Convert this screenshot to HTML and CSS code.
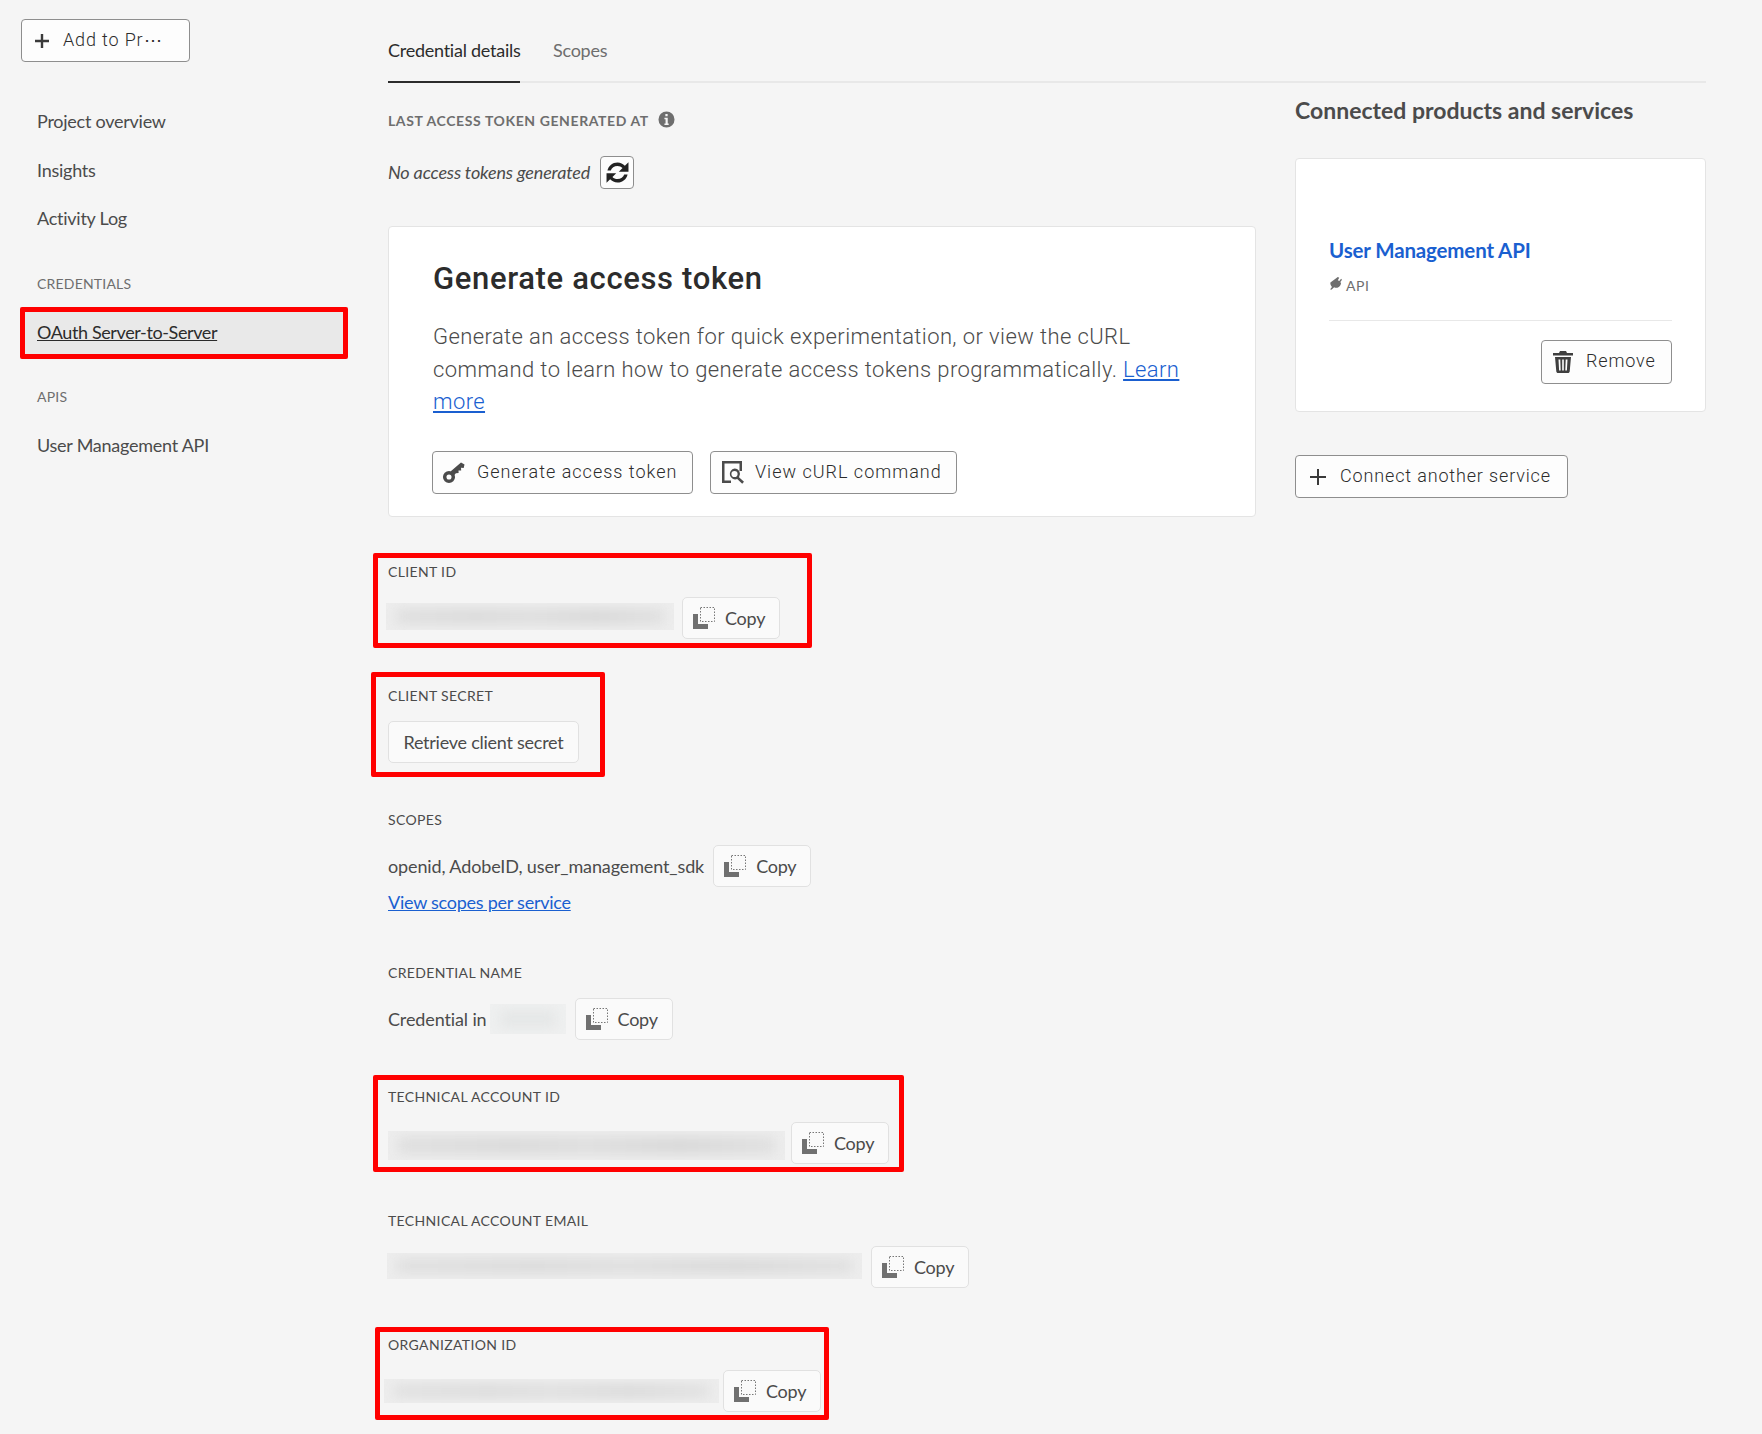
FILE: index.html
```html
<!DOCTYPE html>
<html lang="en">
<head>
<meta charset="utf-8">
<title>Credential details</title>
<link rel="stylesheet" href="styles.css">
</head>
<body>
<div class="page">
  <aside class="sidebar">
    <button class="btn btn-add"><svg class="ico-plus" viewBox="0 0 14 14"><path d="M5.800 0h2.400v5.800H14v2.400H8.200V14H5.800V8.200H0V5.800h5.800z"/></svg><span>Add to Pr⋯</span></button>
    <nav class="nav">
      <a class="nav-item">Project overview</a>
      <a class="nav-item">Insights</a>
      <a class="nav-item">Activity Log</a>
      <div class="nav-head nav-head-cred">CREDENTIALS</div>
      <a class="nav-item nav-active"><span>OAuth Server-to-Server</span><i class="mark"></i></a>
      <div class="nav-head nav-head-api">APIS</div>
      <a class="nav-item">User Management API</a>
    </nav>
  </aside>
  <main class="main">
    <div class="tabs">
      <a class="tab tab-active">Credential details</a>
      <a class="tab">Scopes</a>
    </div>
    <div class="columns">
      <section class="left">
        <div class="token-head">
          <span class="token-label">LAST ACCESS TOKEN GENERATED AT</span>
          <svg class="ico-info" viewBox="0 0 18 18"><path fill-rule="evenodd" d="M9 .5a8.500 8.500 0 1 0 0 17 8.500 8.500 0 0 0 0-17zM7.800 3.200h2.400v2.400H7.800zM6.800 7.200h3.500v6h1v1.500H6.800v-1.500h1.200V8.700H6.800z"/></svg>
        </div>
        <div class="token-row">
          <em>No access tokens generated</em>
          <button class="btn btn-refresh"><svg viewBox="0 0 24 24"><path d="M4.200 10.500C5 6.800 8.200 4.200 12 4.200c2.300 0 4.300 1 5.700 2.500L20.500 4v7.500H13l2.900-2.900c-1-1-2.400-1.700-3.900-1.700-2.500 0-4.600 1.600-5.200 3.600zM19.800 13.500c-.8 3.700-4 6.300-7.800 6.300-2.300 0-4.300-1-5.700-2.500L3.500 20v-7.500H11l-2.900 2.900c1 1 2.400 1.700 3.900 1.700 2.500 0 4.600-1.600 5.200-3.600z"/></svg></button>
        </div>
        <div class="card gen">
          <h2 class="gen-title">Generate access token</h2>
          <p class="gen-text">Generate an access token for quick experimentation, or view the cURL command to learn how to generate access tokens programmatically. <a class="gen-link">Learn</a> <a class="gen-link">more</a></p>
          <div class="gen-actions">
            <button class="btn btn-gen"><svg viewBox="0 0 24 24"><circle class="key-ring" cx="7" cy="17" r="4.300"/><path d="M8.500 11.500L19 2.500l3.500 2-.8 3.500-2.700-.3.200 2.700-2.700.2.100 2.400-2.700.2-2.300 2.500z"/></svg><span>Generate access token</span></button>
            <button class="btn btn-curl"><svg viewBox="0 0 24 24"><path fill-rule="evenodd" d="M1 1h20v10h-2.500V3.500h-15v17H10V23H1z"/><path fill-rule="evenodd" d="M13.500 8.500a5.500 5.500 0 0 1 4.500 8.700l5 4.600-1.800 2-5-4.700a5.500 5.500 0 1 1-2.700-10.600zm0 2.400a3.100 3.100 0 1 0 0 6.200 3.100 3.100 0 0 0 0-6.200z"/></svg><span>View cURL command</span></button>
          </div>
        </div>

        <div class="field field-first">
          <i class="mark mark-client"></i>
          <div class="field-label">CLIENT ID</div>
          <div class="field-row">
            <div class="redact redact-client"></div>
            <button class="btn-copy"><svg class="ico-copy" viewBox="0 0 22 22"><path d="M0 7h5v10h10v5H0z"/><rect x="7.500" y=".5" width="14" height="14" fill="none" stroke="#777" stroke-dasharray="1.500 1.500"/></svg><span>Copy</span></button>
          </div>
        </div>

        <div class="field">
          <i class="mark mark-secret"></i>
          <div class="field-label">CLIENT SECRET</div>
          <div class="field-row">
            <button class="btn-copy btn-secret">Retrieve client secret</button>
          </div>
        </div>

        <div class="field">
          <div class="field-label">SCOPES</div>
          <div class="field-row">
            <span class="value">openid, AdobeID, user_management_sdk</span>
            <button class="btn-copy"><svg class="ico-copy" viewBox="0 0 22 22"><path d="M0 7h5v10h10v5H0z"/><rect x="7.500" y=".5" width="14" height="14" fill="none" stroke="#777" stroke-dasharray="1.500 1.500"/></svg><span>Copy</span></button>
          </div>
          <a class="scope-link">View scopes per service</a>
        </div>

        <div class="field field-after-link">
          <div class="field-label">CREDENTIAL NAME</div>
          <div class="field-row">
            <span class="value">Credential in</span>
            <div class="redact redact-name"></div>
            <button class="btn-copy"><svg class="ico-copy" viewBox="0 0 22 22"><path d="M0 7h5v10h10v5H0z"/><rect x="7.500" y=".5" width="14" height="14" fill="none" stroke="#777" stroke-dasharray="1.500 1.500"/></svg><span>Copy</span></button>
          </div>
        </div>

        <div class="field">
          <i class="mark mark-tech"></i>
          <div class="field-label">TECHNICAL ACCOUNT ID</div>
          <div class="field-row">
            <div class="redact redact-tech"></div>
            <button class="btn-copy"><svg class="ico-copy" viewBox="0 0 22 22"><path d="M0 7h5v10h10v5H0z"/><rect x="7.500" y=".5" width="14" height="14" fill="none" stroke="#777" stroke-dasharray="1.500 1.500"/></svg><span>Copy</span></button>
          </div>
        </div>

        <div class="field">
          <div class="field-label">TECHNICAL ACCOUNT EMAIL</div>
          <div class="field-row">
            <div class="redact redact-email"></div>
            <button class="btn-copy"><svg class="ico-copy" viewBox="0 0 22 22"><path d="M0 7h5v10h10v5H0z"/><rect x="7.500" y=".5" width="14" height="14" fill="none" stroke="#777" stroke-dasharray="1.500 1.500"/></svg><span>Copy</span></button>
          </div>
        </div>

        <div class="field">
          <i class="mark mark-org"></i>
          <div class="field-label">ORGANIZATION ID</div>
          <div class="field-row">
            <div class="redact redact-org"></div>
            <button class="btn-copy"><svg class="ico-copy" viewBox="0 0 22 22"><path d="M0 7h5v10h10v5H0z"/><rect x="7.500" y=".5" width="14" height="14" fill="none" stroke="#777" stroke-dasharray="1.500 1.500"/></svg><span>Copy</span></button>
          </div>
        </div>
      </section>

      <section class="right">
        <h2 class="right-title">Connected products and services</h2>
        <div class="card service">
          <a class="service-name">User Management API</a>
          <div class="service-type"><svg viewBox="0 0 14 14"><path d="M9.500 0l1.500.8-1.500 2.700 1.600.9L13 1.800l1 1.200-2 2.600 1 .6c-.2 2.600-1.700 4.700-4 5.300-1.300.4-2.500.2-3.500-.4L3.500 13 2 14l-.5-1 1.700-2.300C1.800 9.400 1.200 7.500 1.500 6z"/></svg><span>API</span></div>
          <div class="service-foot">
            <button class="btn btn-remove"><svg viewBox="0 0 20 22"><path fill-rule="evenodd" d="M7 0h6l1 2h6v2.500H0V2h6zM2 6h16l-1.300 14.500c-.1.900-.8 1.500-1.700 1.500H5c-.9 0-1.600-.6-1.700-1.500zM5.500 8.500l.6 11h1.600l-.4-11zm3.700 0v11h1.600v-11zm3.500 0l-.4 11h1.600l.6-11z"/></svg><span>Remove</span></button>
          </div>
        </div>
        <button class="btn btn-connect"><svg class="ico-plus" viewBox="0 0 16 16"><path d="M7 0h2v7h7v2H9v7H7V9H0V7h7z"/></svg><span>Connect another service</span></button>
      </section>
    </div>
  </main>
</div>
</body>
</html>
```
FILE: styles.css
```css
* { box-sizing: border-box; }
html, body { margin: 0; padding: 0; }
body {
  background: #f5f5f5;
  color: #4b4b4b;
  font-family: Lato, "Noto Sans", "Liberation Sans", sans-serif;
  font-size: 18px;
  letter-spacing: -.25px;
}
.page {
  display: flex;
  height: 1434px;
  overflow: hidden;
}
button { font: inherit; color: inherit; letter-spacing: inherit; cursor: pointer; }

/* Sidebar */
.sidebar {
  flex: 0 0 388px;
  padding: 19px 0 0 21px;
}
.btn {
  display: inline-flex;
  align-items: center;
  background: #fdfdfd;
  border: 1px solid #8e8e8e;
  border-radius: 4px;
  font-family: Roboto, "Liberation Sans", sans-serif;
  font-size: 18px;
  font-weight: 300;
  letter-spacing: .85px;
  color: #2c2c2c;
  padding: 0 0 2px;
}
.btn-add {
  width: 169px;
  height: 43px;
  padding-left: 13px;
}
.ico-plus { width: 14px; height: 14px; fill: #3a3a3a; flex: none; margin-top: 2px; }
.btn-add span { margin-left: 14px; }
.nav { margin-top: 47px; }
.nav-item {
  display: block;
  height: 48.500px;
  line-height: 24px;
  margin-left: 16px;
  color: #4b4b4b;
}
.nav-head {
  font-size: 14px;
  line-height: 20px;
  margin-left: 16px;
  letter-spacing: .2px;
  color: #6e6e6e;
}
.nav-head-cred { margin-top: 19px; }
.nav-active {
  position: relative;
  width: 328px;
  height: 52px;
  margin: 13px 0 28px -1px;
  padding-left: 17px;
  line-height: 50px;
  letter-spacing: -.38px;
  background: #e9e9e9;
  color: #2c2c2c;
}
.nav-active span { text-decoration: underline; }
.nav-head-api { margin-bottom: 26px; }
.mark {
  position: absolute;
  border: 5px solid #f00;
  border-radius: 2px;
  pointer-events: none;
}
.nav-active .mark { inset: 0; }

/* Main */
.main { flex: 0 0 1318px; }
.tabs {
  display: flex;
  gap: 33px;
  height: 83px;
  padding-top: 38px;
  border-bottom: 2px solid #e8e8e8;
}
.tab {
  height: 45px;
  line-height: 24px;
  color: #6e6e6e;
}
.tab-active {
  width: 132px;
  color: #2c2c2c;
  border-bottom: 2px solid #2c2c2c;
  white-space: nowrap;
}
.columns { display: flex; gap: 39px; }
.left { flex: 0 0 868px; }
.right { flex: 0 0 411px; }

.token-head {
  display: flex;
  align-items: center;
  height: 20px;
  margin-top: 27px;
}
.token-label {
  font-size: 14px;
  font-weight: 700;
  letter-spacing: .6px;
  color: #6e6e6e;
}
.ico-info { width: 17px; height: 17px; fill: #6e6e6e; margin: -2px 0 0 9px; }
.token-row {
  display: flex;
  align-items: center;
  gap: 10px;
  height: 33px;
  margin-top: 26px;
}
.token-row em { color: #4b4b4b; margin-bottom: 2px; letter-spacing: -.15px; }
.btn-refresh {
  width: 34px;
  height: 33px;
  justify-content: center;
  padding: 0;
}
.btn-refresh svg { width: 31px; height: 31px; fill: #222; flex: none; }

.card {
  background: #fff;
  border: 1px solid #e4e4e4;
  border-radius: 4px;
}
.gen {
  height: 291px;
  margin-top: 37px;
  padding: 33px 43px 0 44px;
}
.gen-title {
  margin: 0;
  font-family: Roboto, "Liberation Sans", sans-serif;
  font-size: 31px;
  font-weight: 500;
  line-height: 38px;
  letter-spacing: .65px;
  color: #2c2c2c;
}
.gen-text {
  margin: 23px 0 0;
  font-family: Roboto, "Liberation Sans", sans-serif;
  font-size: 22px;
  font-weight: 300;
  line-height: 32.500px;
  letter-spacing: .4px;
  color: #4b4b4b;
}
.gen-link, .scope-link { color: #1a5fd0; text-decoration: underline; }
.gen-actions {
  display: flex;
  gap: 17px;
  margin: 32px 0 0 -1px;
}
.btn-gen, .btn-curl { height: 43px; letter-spacing: 1px; }
.btn-gen { width: 261px; padding-left: 9px; }
.btn-curl { width: 247px; padding-left: 10px; }
.btn-gen svg, .btn-curl svg { width: 24px; height: 24px; fill: #4b4b4b; flex: none; margin-top: 2px; }
.key-ring { fill: none; stroke: #4b4b4b; stroke-width: 3.500; }
.btn-gen span { margin-left: 11px; }
.btn-curl span { margin-left: 10px; }

/* Fields */
.field {
  position: relative;
  margin-top: 47px;
}
.field-first { margin-top: 45px; }
.field-after-link { margin-top: 49px; }
.field-label {
  height: 20px;
  line-height: 20px;
  font-size: 14px;
  letter-spacing: .35px;
  color: #4b4b4b;
}
.field-row {
  display: flex;
  align-items: center;
  height: 42px;
  margin-top: 15px;
}
.value { letter-spacing: -.12px; }
.btn-copy {
  display: inline-flex;
  align-items: center;
  flex: none;
  height: 42px;
  background: #fafafa;
  border: 1px solid #e1e1e1;
  border-radius: 5px;
  padding: 0 0 0 10px;
  width: 98px;
  font-size: 18px;
  color: #4b4b4b;
}
.ico-copy { width: 22px; height: 22px; fill: #707070; flex: none; }
.btn-copy span { margin-left: 10px; }
.btn-secret { width: 191px; padding: 0; justify-content: center; }
.field-row .value + .btn-copy { margin-left: 9px; }
.scope-link {
  display: block;
  line-height: 24px;
  margin-top: 3px;
}

.redact {
  position: relative;
  overflow: hidden;
  flex: none;
  background: #ededed;
}
.redact::before {
  content: "";
  position: absolute;
  inset: 6px 10px;
  background: linear-gradient(90deg, #dfdfdf, #dadada 30%, #dedede 50%, #d8d8d8 75%, #e0e0e0);
  filter: blur(6px);
}
.redact-client { width: 288px; height: 27px; margin: -3px 8px 0 -2px; }
.redact-name { width: 76px; height: 30px; margin: 0 9px 0 3px; background: #eff0f0; }
.redact-name::before { background: #e5e7e7; }
.redact-tech { width: 397px; height: 29px; margin: 4px 6px 0 0; }
.redact-email { width: 475px; height: 26px; margin: -3px 9px 0 -1px; }
.redact-org { width: 335px; height: 24px; margin: 0 4px 0 -4px; }

.mark-client { left: -15px; top: -9px; width: 439px; height: 95px; }
.mark-secret { left: -17px; top: -14px; width: 234px; height: 105px; }
.mark-tech { left: -15px; top: -12px; width: 531px; height: 97px; }
.mark-org { left: -13px; top: -8px; width: 454px; height: 93px; }

/* Right */
.right-title {
  margin: 12px 0 0;
  font-size: 23px;
  font-weight: 700;
  line-height: 30px;
  letter-spacing: 0;
  color: #4b4b4b;
}
.service {
  height: 254px;
  margin-top: 33px;
  padding: 77px 33px 0;
}
.service-name {
  display: block;
  font-size: 20.500px;
  font-weight: 700;
  line-height: 28px;
  letter-spacing: -.15px;
  color: #1a5fd0;
}
.service-type {
  display: flex;
  align-items: center;
  height: 20px;
  margin-top: 11px;
  font-size: 14px;
  letter-spacing: .5px;
  color: #6e6e6e;
}
.service-type svg { width: 13px; height: 13px; fill: #6e6e6e; margin: -3px 4px 0 0; }
.service-foot {
  display: flex;
  justify-content: flex-end;
  margin-top: 25px;
  padding-top: 19px;
  border-top: 1px solid #e8e8e8;
}
.btn-remove { width: 131px; height: 44px; padding: 0 0 3px 11px; }
.btn-remove svg { width: 20px; height: 22px; fill: #3f3f3f; flex: none; margin-top: 3px; }
.btn-remove span { margin-left: 13px; }
.btn-connect {
  width: 273px;
  height: 43px;
  margin-top: 43px;
  padding-left: 14px;
}
.btn-connect .ico-plus { width: 16px; height: 16px; }
.btn-connect span { margin-left: 14px; }
```
